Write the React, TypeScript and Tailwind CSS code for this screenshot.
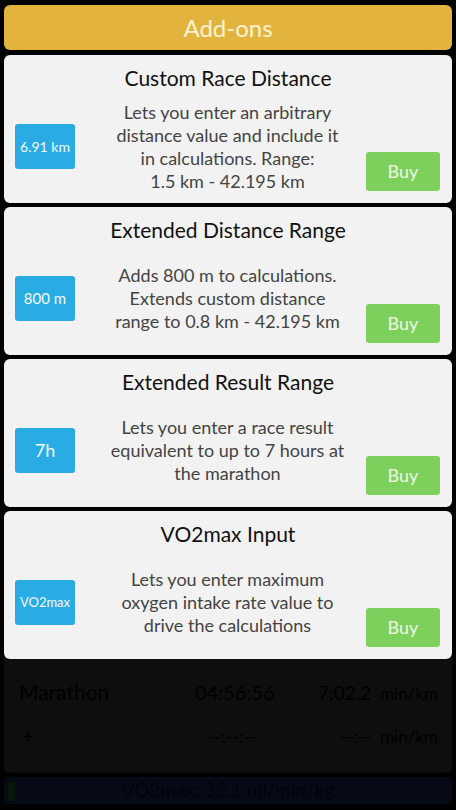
import React from 'react';

interface AddOn {
  title: string;
  badge: string;
  badgeSize: string;
  lines: string[];
}

const addOns: AddOn[] = [
  {
    title: 'Custom Race Distance',
    badge: '6.91 km',
    badgeSize: 'text-[14px]',
    lines: [
      'Lets you enter an arbitrary',
      'distance value and include it',
      'in calculations. Range:',
      '1.5 km - 42.195 km',
    ],
  },
  {
    title: 'Extended Distance Range',
    badge: '800 m',
    badgeSize: 'text-[15px]',
    lines: ['Adds 800 m to calculations.', 'Extends custom distance', 'range to 0.8 km - 42.195 km'],
  },
  {
    title: 'Extended Result Range',
    badge: '7h',
    badgeSize: 'text-[18px]',
    lines: ['Lets you enter a race result', 'equivalent to up to 7 hours at', 'the marathon'],
  },
  {
    title: 'VO2max Input',
    badge: 'VO2max',
    badgeSize: 'text-[13px]',
    lines: ['Lets you enter maximum', 'oxygen intake rate value to', 'drive the calculations'],
  },
];

function AddOnCard({ item }: { item: AddOn }) {
  return (
    <div className="h-[148px] bg-[#f2f2f2] rounded-[6px] flex flex-col">
      <h3 className="pt-[11px] text-center text-[21px] leading-[24px] text-[#111]">{item.title}</h3>
      <div className="flex-1 grid grid-cols-[74px_1fr_74px] pl-[11px] pr-[12px] items-center">
        <div
          className={`w-[60px] h-[45px] rounded-[3px] bg-[#29abe4] text-[#f4fbff] flex items-center justify-center ${item.badgeSize}`}
        >
          {item.badge}
        </div>
        <p className="text-center text-[18px] leading-[23px] text-[#444] whitespace-nowrap">
          {item.lines.map((l) => (
            <span key={l} className="block">
              {l}
            </span>
          ))}
        </p>
        <button className="self-end mb-[12px] w-[74px] h-[39px] rounded-[3px] bg-[#7ed05c] text-[#eef8e8] text-[18px]">
          Buy
        </button>
      </div>
    </div>
  );
}

export default function App() {
  return (
    <div className="relative w-[456px] h-[810px] bg-black overflow-hidden font-['Lato',sans-serif]">
      {/* dimmed screen underneath */}
      <div className="absolute left-[4px] right-[4px] top-[600px] h-[173px] rounded-[6px] bg-[#0e0e0e] text-[#000000]">
        <div className="absolute left-[15px] right-[14px] top-[76px] flex items-baseline">
          <span className="text-[21px] w-[176px]">Marathon</span>
          <span className="text-[20px] w-[123px]">04:56:56</span>
          <span className="text-[19px]">7:02.2</span>
          <span className="ml-auto text-[17px]">min/km</span>
        </div>
        <div className="absolute left-[18px] right-[14px] top-[120px] flex items-baseline">
          <span className="text-[20px] w-[186px]">+</span>
          <span className="text-[18px] w-[132px]">--:--:--</span>
          <span className="text-[18px]">--:--</span>
          <span className="ml-auto text-[17px]">min/km</span>
        </div>
      </div>
      <div className="absolute left-[4px] right-[4px] top-[777px] h-[27px] rounded-[4px] bg-[#050a16] flex items-center justify-center text-[19px] text-[#02040a]">
        <span className="absolute left-[4px] top-[5px] w-[7px] h-[19px] bg-[#061608]" />
        VO2max: 32.1 ml/min/kg
      </div>

      <div className="relative px-[4px] pt-[5px] flex flex-col">
        <div className="h-[45px] rounded-[6px] bg-[#e2b43e] flex items-center justify-center text-[24px] text-[#fdf2d2]">
          Add-ons
        </div>
        <div className="mt-[5px] flex flex-col gap-[4px]">
          {addOns.map((a) => (
            <AddOnCard key={a.title} item={a} />
          ))}
        </div>
      </div>
    </div>
  );
}
